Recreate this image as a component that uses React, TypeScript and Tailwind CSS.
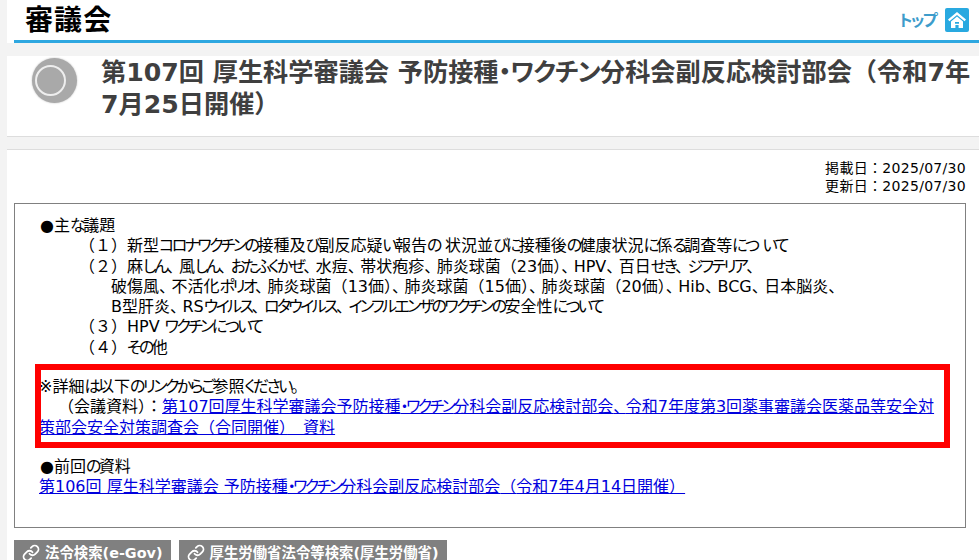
import { Link } from "lucide-react";

const jp = "font-['Verdana','DejaVu_Sans','Noto_Sans_CJK_JP',sans-serif]";

// かな・読点の字幅を詰める（Meiryo UI に近づける）
function T({ children, title }: { children: string; title?: boolean }) {
  const parts = children.split(/([ぁ-んァ-ヶー・]+|[（）１-４：。]+|、)/);
  return (
    <>
      {parts.map((s, i) => {
        if (/^[ぁ-んァ-ヶー・]+$/.test(s)) {
          return <span key={i} className={title ? "tracking-[-0.03em]" : "tracking-[-0.16em]"}>{s}</span>;
        }
        if (/^[（）１-４：。]+$/.test(s)) {
          return <span key={i} className="[font-feature-settings:normal]">{s}</span>;
        }
        if (s === "、") {
          return <span key={i} className="tracking-[-0.22em] [font-feature-settings:normal]">{s}</span>;
        }
        return s;
      })}
    </>
  );
}

function HomeIcon() {
  return (
    <svg width="24" height="24" viewBox="0 0 24 24" className="block">
      <rect width="24" height="24" rx="2" fill="#29a9e0" />
      <path d="M12 4 3 11.6l1.4 1.6L12 7l7.6 6.2 1.4-1.6z" fill="#fff" />
      <path fillRule="evenodd" d="M6 13.4 12 8.4l6 5V20H6zM10 14v1.8h4V14zM10.4 17v3h3.2v-3z" fill="#fff" />
    </svg>
  );
}

function GrayButton({ children }: { children: string }) {
  return (
    <a className="flex h-[30px] items-start gap-[5px] bg-[#808080] pl-2 pr-[8px] pt-[4px] text-[14.4px] font-bold text-white">
      <Link size={18} strokeWidth={2.4} />
      <span className="-mt-px"><T>{children}</T></span>
    </a>
  );
}

export default function App() {
  return (
    <div className={`h-[560px] w-[979px] overflow-hidden bg-[#f3f3f3] pl-[7px] ${jp} [font-feature-settings:"palt"]`}>
      {/* ヘッダー */}
      <header className="h-[43px] bg-white pl-[7px]">
        <div className="flex h-[43px] items-start justify-between border-b-[3px] border-[#2ea7e0]">
          <h1 className="pl-[11px] pt-[3px] text-[28px] leading-[36px] font-bold tracking-[0.04em] text-black">審議会</h1>
          <a className="mr-[10px] mt-[7px] flex items-center gap-[9px]">
            <span className="mt-[2px] text-[16px] font-bold tracking-[-0.1em] text-[#3d9ccb]">トップ</span>
            <HomeIcon />
          </a>
        </div>
      </header>

      {/* タイトル */}
      <section className="mt-[13px] flex h-[81px] border-b border-[#dddddd] bg-white">
        <div className="ml-[25px] mt-[2px] flex size-[45px] shrink-0 items-center justify-center rounded-full bg-[#a9a9a9] shadow-[0_0_2px_#bbbbbb]">
          <div className="mr-[9px] size-[31px] rounded-full border-2 border-[#eeeeee] bg-[#a9a9a9]" />
        </div>
        <h2 className="ml-[24px] pr-[3px] pt-[1px] text-[25.2px] leading-[32px] font-bold text-[#3f3f3f]">
          <T title>第107回 厚生科学審議会 予防接種・ワクチン分科会副反応検討部会（令和7年7月25日開催）</T>
        </h2>
      </section>

      {/* 本文 */}
      <div className="mt-[12px] h-[420px] border-t border-[#dddddd] bg-white pl-[7px] pr-[13px] text-[16px] leading-[20.3px] text-black">
        <div className="pt-[9px] text-right text-[14px] leading-[18px] tracking-[0.3px]">
          <p><T>掲載日：2025/07/30</T></p>
          <p><T>更新日：2025/07/30</T></p>
        </div>
        <div className="mt-[8px] h-[325px] border border-[#808080] pl-[24px] pr-[30px] pt-[12px]">
          <p className="pl-px">●<T>主な議題</T></p>
          <div className="pl-[40px]">
            <p><T>（１）新型コロナワクチンの接種及び副反応疑い報告の 状況並びに接種後の健康状況に係る調査等につ いて</T></p>
            <p><T>（２）麻しん、風しん、おたふくかぜ、水痘、帯状疱疹、肺炎球菌（23価）、HPV、百日せき、ジフテリア、</T></p>
            <div className="pl-[32px]">
              <p><T>破傷風、不活化ポリオ、肺炎球菌（13価）、肺炎球菌（15価）、肺炎球菌（20価）、Hib、BCG、日本脳炎、</T></p>
              <p><T>B型肝炎、RSウイルス、ロタウイルス、インフルエンザのワクチンの安全性について</T></p>
            </div>
            <p><T>（３）HPV ワクチンについて</T></p>
            <p><T>（４）その他</T></p>
          </div>
          <div className="relative mt-[19px]">
            <p><T>※詳細は以下のリンクからご参照ください。</T></p>
            <p>
              <span className="pl-[19px]"><T>（会議資料）：</T></span>
              <a className="text-[#0000dd] underline">
                <T>第107回厚生科学審議会予防接種・ワクチン分科会副反応検討部会、令和7年度第3回薬事審議会医薬品等安全対策部会安全対策調査会（合同開催）　資料</T>
              </a>
            </p>
            <div className="absolute -left-[4px] -right-[15px] -top-[13px] h-[84px] border-[6px] border-[#ff0000]" />
          </div>
          <p className="mt-[19px] pl-px">●<T>前回の資料</T></p>
          <a className="text-[#0000dd] underline"><T>第106回 厚生科学審議会 予防接種・ワクチン分科会副反応検討部会（令和7年4月14日開催）</T></a>
        </div>
        <div className="mt-[12px] flex gap-2">
          <GrayButton>法令検索(e-Gov)</GrayButton>
          <GrayButton>厚生労働省法令等検索(厚生労働省)</GrayButton>
        </div>
      </div>
    </div>
  );
}
